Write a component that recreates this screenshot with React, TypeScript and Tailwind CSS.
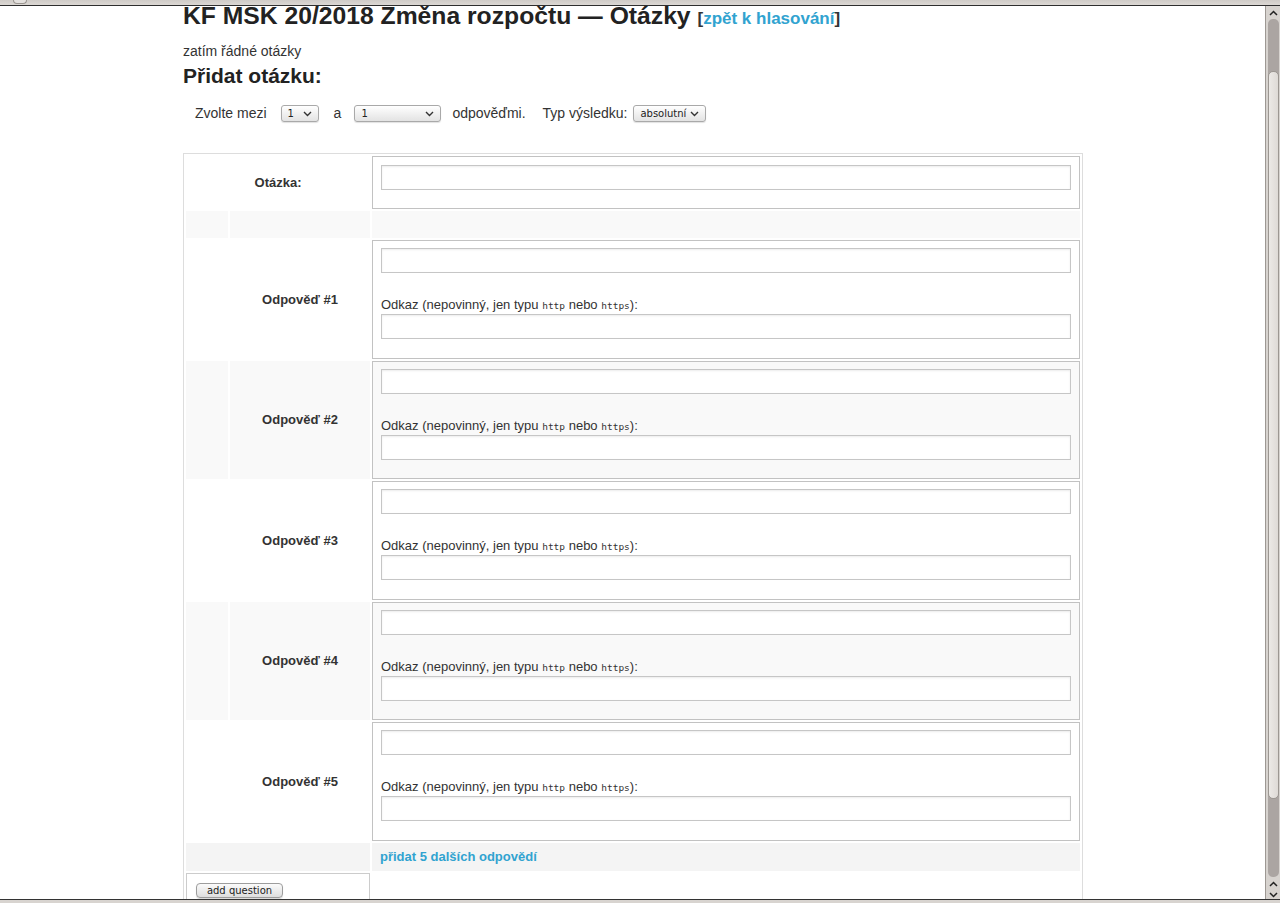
const sans = "font-['Liberation_Sans',Arial,sans-serif]";
const ui = "font-['DejaVu_Sans',sans-serif]";

function Chevron({ className = '' }: { className?: string }) {
  return (
    <svg className={className} width="9" height="6" viewBox="0 0 9 6" aria-hidden="true">
      <path d="M1 1l3.5 3.5L8 1" fill="none" stroke="#333" strokeWidth="1.4" />
    </svg>
  );
}

function FakeSelect({ value, className }: { value: string; className: string }) {
  return (
    <div
      className={`${ui} ${className} inline-flex h-[17px] items-center justify-between rounded-[3px] border border-[#a9a9a9] bg-gradient-to-b from-white to-[#e3e3e3] pl-[6px] pr-[6px] text-[10px] text-[#222] shadow-[0_1px_1px_rgba(0,0,0,0.12)]`}
    >
      <span>{value}</span>
      <Chevron />
    </div>
  );
}

function TextInput() {
  return (
    <input
      type="text"
      className="block h-[25px] w-full border border-[#c6c6c6] bg-white shadow-[inset_0_1px_2px_rgba(0,0,0,0.08)]"
    />
  );
}

function AnswerRow({ n }: { n: number }) {
  const striped = n % 2 === 0;
  const bg = striped ? 'bg-[#f9f9f9]' : 'bg-white';
  return (
    <>
      <div className={bg} />
      <div className={`${bg} flex items-center justify-center text-[13px] font-bold text-[#333]`}>
        Odpověď #{n}
      </div>
      <div className={`${bg} border border-[#c2c2c2] px-[8px] pt-[7px] pb-[18.5px]`}>
        <TextInput />
        <div className="mt-[24px] mb-[2px] h-[15px] text-[13px] leading-[15px] text-[#333]">
          Odkaz (nepovinný, jen typu{' '}
          <code className="font-['DejaVu_Sans_Mono',monospace] text-[9.5px] leading-none">http</code> nebo{' '}
          <code className="font-['DejaVu_Sans_Mono',monospace] text-[9.5px] leading-none">https</code>):
        </div>
        <TextInput />
      </div>
    </>
  );
}

function Scrollbar() {
  return (
    <div className="flex w-[15px] flex-col items-center border-l border-[#9d9893] bg-[#d7d3cf]">
      <svg className="mt-[4px]" width="9" height="6" viewBox="0 0 9 6" aria-hidden="true">
        <path d="M1 5l3.5-3.5L8 5" fill="none" stroke="#222" strokeWidth="1.5" />
      </svg>
      <div className="mt-[3px] flex w-[11px] flex-1 flex-col rounded-[5px] bg-[#aba5a2]">
        <div className="h-[52px]" />
        <div className="h-[728px] rounded-[5px] border border-[#9c9792] bg-gradient-to-r from-[#ece9e6] to-[#dedad6]" />
      </div>
      <svg className="mt-[4px]" width="9" height="6" viewBox="0 0 9 6" aria-hidden="true">
        <path d="M1 5l3.5-3.5L8 5" fill="none" stroke="#222" strokeWidth="1.5" />
      </svg>
      <svg className="mt-[5px] mb-[1px]" width="9" height="6" viewBox="0 0 9 6" aria-hidden="true">
        <path d="M1 1l3.5 3.5L8 1" fill="none" stroke="#222" strokeWidth="1.5" />
      </svg>
    </div>
  );
}

export default function App() {
  return (
    <div className={`${sans} flex h-[903px] w-[1280px] flex-col overflow-hidden bg-white`}>
      <div className="flex h-[6px] shrink-0 border-b border-[#2e2e2e] bg-gradient-to-b from-[#cfcbc7] to-[#dcd8d4]">
        <div className="ml-[13px] h-[4px] w-[14px] rounded-b-full border border-t-0 border-[#9a9590] bg-[#e4e1de]" />
      </div>

      <div className="flex min-h-0 flex-1">
        <main className="min-w-0 flex-1 overflow-hidden">
          <div className="-mt-[6px] ml-[183px] w-[900px] text-[#333]">
            <h1 className="h-[30px] whitespace-nowrap text-[24.7px] font-bold leading-[31px] text-[#222]">
              KF MSK 20/2018 Změna rozpočtu — Otázky{' '}
              <span className="text-[17px] text-[#333]">
                [<a className="text-[#31a3d0]" href="#">zpět k hlasování</a>]
              </span>
            </h1>

            <p className="mt-[11px] text-[14px] leading-[20px]">zatím řádné otázky</p>

            <h2 className="mt-[2px] text-[21px] font-bold leading-[26px] text-[#222]">Přidat otázku:</h2>

            <div className="mt-[14px] flex h-[21px] items-center pl-[12px] text-[14px]">
              <span>Zvolte mezi</span>
              <FakeSelect value="1" className="ml-[14px] w-[38px]" />
              <span className="ml-[15px]">a</span>
              <FakeSelect value="1" className="ml-[13px] w-[87px]" />
              <span className="ml-[11px]">odpověďmi.</span>
              <span className="ml-[17px]">Typ výsledku:</span>
              <FakeSelect value="absolutní" className="ml-[6px] w-[73px] pl-[5px]" />
            </div>

            <div className="mt-[29px] grid grid-cols-[42px_140px_1fr] gap-[2px] border border-[#dddddd] p-[2px] pb-0">
              <div className="col-span-2 flex items-center justify-center text-[13px] font-bold">Otázka:</div>
              <div className="border border-[#c2c2c2] px-[8px] pt-[8px] pb-[18px]">
                <TextInput />
              </div>

              <div className="h-[27px] bg-[#f9f9f9]" />
              <div className="h-[27px] bg-[#f9f9f9]" />
              <div className="h-[27px] bg-[#f9f9f9]" />

              {[1, 2, 3, 4, 5].map((n) => (
                <AnswerRow key={n} n={n} />
              ))}

              <div className="col-span-2 h-[28px] bg-[#f4f4f4]" />
              <div className="flex h-[28px] items-center bg-[#f4f4f4] pl-[8px]">
                <a href="#" className="text-[13px] font-bold text-[#31a3d0]">
                  přidat 5 dalších odpovědí
                </a>
              </div>

              <div className="col-span-2 h-[40px] border border-[#cccccc] pl-[9px] pt-[9px]">
                <button
                  type="button"
                  className={`${ui} flex h-[15px] w-[87px] items-center justify-center rounded-[4px] border border-[#9d9d9d] bg-gradient-to-b from-[#fbfbfb] to-[#dedede] text-[10px] text-[#222] shadow-[0_1px_1px_rgba(0,0,0,0.15)]`}
                >
                  add question
                </button>
              </div>
              <div />
            </div>
          </div>
        </main>
        <Scrollbar />
      </div>

      <div className="h-[4px] shrink-0 border-t border-[#333] bg-[#d8d4d0]" />
    </div>
  );
}
